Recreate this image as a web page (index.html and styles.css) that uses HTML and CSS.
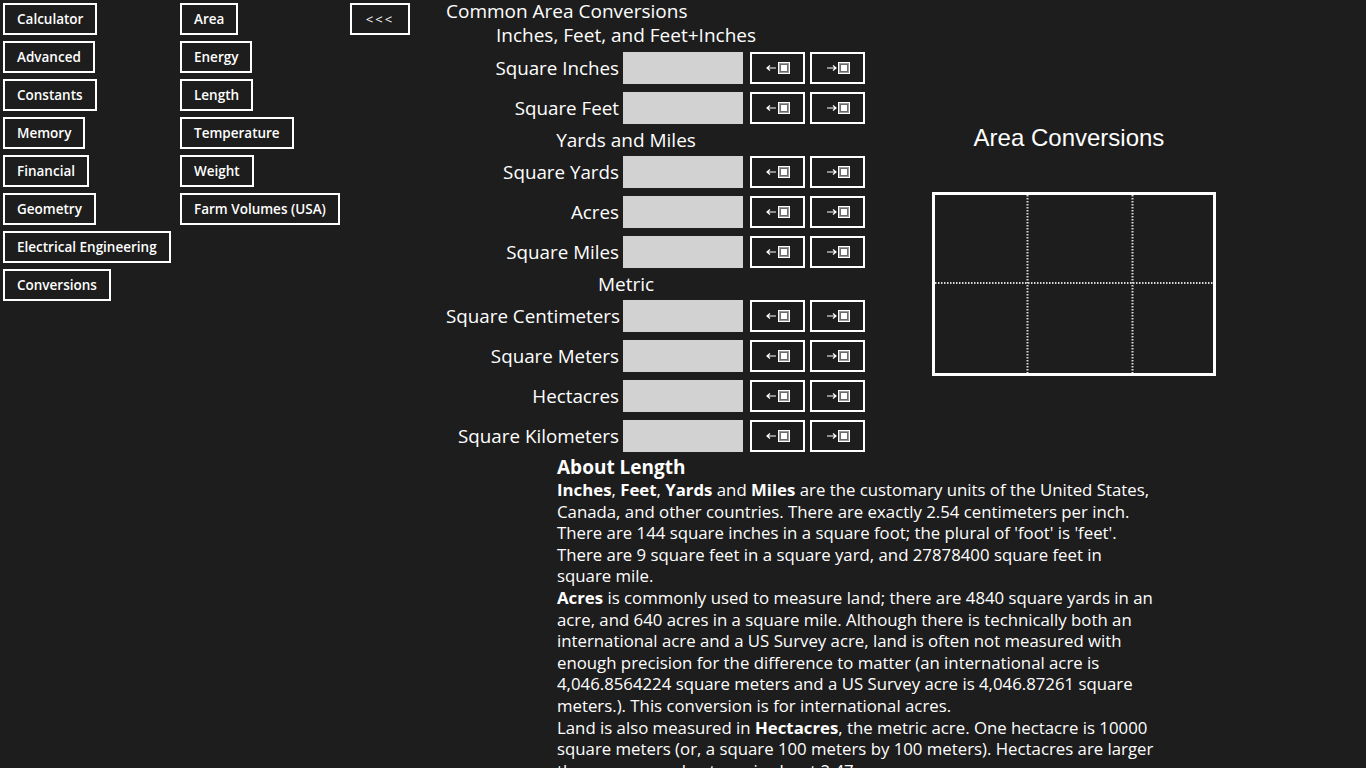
FILE: index.html
```html
<!DOCTYPE html>
<html lang="en">
<head>
<meta charset="utf-8">
<title>Area Conversions</title>
<link rel="stylesheet" href="styles.css">
</head>
<body>
<svg class="defs" width="0" height="0" aria-hidden="true">
  <symbol id="box" viewBox="0 0 12 12">
    <rect x="0.5" y="0.5" width="11" height="11" fill="#9a9a9a" stroke="#ffffff" stroke-width="1"/>
    <rect x="2.5" y="2.5" width="7" height="7" fill="#ffffff" stroke="#6a6a6a" stroke-width="1"/>
  </symbol>
</svg>
<div class="app">
  <nav class="nav-col col1">
    <button class="nav-btn">Calculator</button>
    <button class="nav-btn">Advanced</button>
    <button class="nav-btn">Constants</button>
    <button class="nav-btn">Memory</button>
    <button class="nav-btn">Financial</button>
    <button class="nav-btn">Geometry</button>
    <button class="nav-btn">Electrical Engineering</button>
    <button class="nav-btn">Conversions</button>
  </nav>
  <nav class="nav-col col2">
    <button class="nav-btn">Area</button>
    <button class="nav-btn">Energy</button>
    <button class="nav-btn">Length</button>
    <button class="nav-btn">Temperature</button>
    <button class="nav-btn">Weight</button>
    <button class="nav-btn">Farm Volumes (USA)</button>
  </nav>
  <div class="back-col">
    <button class="nav-btn back-btn">&lt;&lt;&lt;</button>
  </div>
  <main class="main">
    <div class="top">
      <section class="converter">
        <h1 class="title">Common Area Conversions</h1>
        <h2 class="group first">Inches, Feet, and Feet+Inches</h2>
        <div class="row">
          <label class="lbl">Square Inches</label><div class="field"></div>
          <button class="arrow-btn"><svg class="ico" viewBox="0 0 26 14"><path d="M2 7H11M5 4.5L2 7L5 9.5" fill="none" stroke="#fff" stroke-width="1.2"/><use href="#box" x="13" y="1" width="12" height="12"/></svg></button>
          <button class="arrow-btn"><svg class="ico" viewBox="0 0 26 14"><path d="M2 7H11M8 4.5L11 7L8 9.5" fill="none" stroke="#fff" stroke-width="1.2"/><use href="#box" x="13" y="1" width="12" height="12"/></svg></button>
        </div>
        <div class="row">
          <label class="lbl">Square Feet</label><div class="field"></div>
          <button class="arrow-btn"><svg class="ico" viewBox="0 0 26 14"><path d="M2 7H11M5 4.5L2 7L5 9.5" fill="none" stroke="#fff" stroke-width="1.2"/><use href="#box" x="13" y="1" width="12" height="12"/></svg></button>
          <button class="arrow-btn"><svg class="ico" viewBox="0 0 26 14"><path d="M2 7H11M8 4.5L11 7L8 9.5" fill="none" stroke="#fff" stroke-width="1.2"/><use href="#box" x="13" y="1" width="12" height="12"/></svg></button>
        </div>
        <h2 class="group">Yards and Miles</h2>
        <div class="row">
          <label class="lbl">Square Yards</label><div class="field"></div>
          <button class="arrow-btn"><svg class="ico" viewBox="0 0 26 14"><path d="M2 7H11M5 4.5L2 7L5 9.5" fill="none" stroke="#fff" stroke-width="1.2"/><use href="#box" x="13" y="1" width="12" height="12"/></svg></button>
          <button class="arrow-btn"><svg class="ico" viewBox="0 0 26 14"><path d="M2 7H11M8 4.5L11 7L8 9.5" fill="none" stroke="#fff" stroke-width="1.2"/><use href="#box" x="13" y="1" width="12" height="12"/></svg></button>
        </div>
        <div class="row">
          <label class="lbl">Acres</label><div class="field"></div>
          <button class="arrow-btn"><svg class="ico" viewBox="0 0 26 14"><path d="M2 7H11M5 4.5L2 7L5 9.5" fill="none" stroke="#fff" stroke-width="1.2"/><use href="#box" x="13" y="1" width="12" height="12"/></svg></button>
          <button class="arrow-btn"><svg class="ico" viewBox="0 0 26 14"><path d="M2 7H11M8 4.5L11 7L8 9.5" fill="none" stroke="#fff" stroke-width="1.2"/><use href="#box" x="13" y="1" width="12" height="12"/></svg></button>
        </div>
        <div class="row">
          <label class="lbl">Square Miles</label><div class="field"></div>
          <button class="arrow-btn"><svg class="ico" viewBox="0 0 26 14"><path d="M2 7H11M5 4.5L2 7L5 9.5" fill="none" stroke="#fff" stroke-width="1.2"/><use href="#box" x="13" y="1" width="12" height="12"/></svg></button>
          <button class="arrow-btn"><svg class="ico" viewBox="0 0 26 14"><path d="M2 7H11M8 4.5L11 7L8 9.5" fill="none" stroke="#fff" stroke-width="1.2"/><use href="#box" x="13" y="1" width="12" height="12"/></svg></button>
        </div>
        <h2 class="group">Metric</h2>
        <div class="row">
          <label class="lbl">Square Centimeters</label><div class="field"></div>
          <button class="arrow-btn"><svg class="ico" viewBox="0 0 26 14"><path d="M2 7H11M5 4.5L2 7L5 9.5" fill="none" stroke="#fff" stroke-width="1.2"/><use href="#box" x="13" y="1" width="12" height="12"/></svg></button>
          <button class="arrow-btn"><svg class="ico" viewBox="0 0 26 14"><path d="M2 7H11M8 4.5L11 7L8 9.5" fill="none" stroke="#fff" stroke-width="1.2"/><use href="#box" x="13" y="1" width="12" height="12"/></svg></button>
        </div>
        <div class="row">
          <label class="lbl">Square Meters</label><div class="field"></div>
          <button class="arrow-btn"><svg class="ico" viewBox="0 0 26 14"><path d="M2 7H11M5 4.5L2 7L5 9.5" fill="none" stroke="#fff" stroke-width="1.2"/><use href="#box" x="13" y="1" width="12" height="12"/></svg></button>
          <button class="arrow-btn"><svg class="ico" viewBox="0 0 26 14"><path d="M2 7H11M8 4.5L11 7L8 9.5" fill="none" stroke="#fff" stroke-width="1.2"/><use href="#box" x="13" y="1" width="12" height="12"/></svg></button>
        </div>
        <div class="row">
          <label class="lbl">Hectacres</label><div class="field"></div>
          <button class="arrow-btn"><svg class="ico" viewBox="0 0 26 14"><path d="M2 7H11M5 4.5L2 7L5 9.5" fill="none" stroke="#fff" stroke-width="1.2"/><use href="#box" x="13" y="1" width="12" height="12"/></svg></button>
          <button class="arrow-btn"><svg class="ico" viewBox="0 0 26 14"><path d="M2 7H11M8 4.5L11 7L8 9.5" fill="none" stroke="#fff" stroke-width="1.2"/><use href="#box" x="13" y="1" width="12" height="12"/></svg></button>
        </div>
        <div class="row">
          <label class="lbl">Square Kilometers</label><div class="field"></div>
          <button class="arrow-btn"><svg class="ico" viewBox="0 0 26 14"><path d="M2 7H11M5 4.5L2 7L5 9.5" fill="none" stroke="#fff" stroke-width="1.2"/><use href="#box" x="13" y="1" width="12" height="12"/></svg></button>
          <button class="arrow-btn"><svg class="ico" viewBox="0 0 26 14"><path d="M2 7H11M8 4.5L11 7L8 9.5" fill="none" stroke="#fff" stroke-width="1.2"/><use href="#box" x="13" y="1" width="12" height="12"/></svg></button>
        </div>
      </section>
      <aside class="panel">
        <h2 class="panel-title">Area Conversions</h2>
        <svg class="grid-box" width="284" height="184" viewBox="0 0 284 184">
          <line x1="95.5" y1="3" x2="95.5" y2="181" stroke="#d8d8d8" stroke-width="2" stroke-dasharray="1.5 1.5"/>
          <line x1="200.5" y1="3" x2="200.5" y2="181" stroke="#d8d8d8" stroke-width="2" stroke-dasharray="1.5 1.5"/>
          <line x1="3" y1="91" x2="281" y2="91" stroke="#d8d8d8" stroke-width="2" stroke-dasharray="1.5 1.5"/>
          <rect x="1.5" y="1.5" width="281" height="181" fill="none" stroke="#ffffff" stroke-width="3"/>
        </svg>
      </aside>
    </div>
    <article class="about">
      <h3 class="about-title">About Length</h3>
      <p class="about-text"><b>Inches</b>, <b>Feet</b>, <b>Yards</b> and <b>Miles</b> are the customary units of the United States,<br>Canada, and other countries. There are exactly 2.54 centimeters per inch.<br>There are 144 square inches in a square foot; the plural of 'foot' is 'feet'.<br>There are 9 square feet in a square yard, and 27878400 square feet in<br>square mile.</p>
      <p class="about-text"><b>Acres</b> is commonly used to measure land; there are 4840 square yards in an<br>acre, and 640 acres in a square mile. Although there is technically both an<br>international acre and a US Survey acre, land is often not measured with<br>enough precision for the difference to matter (an international acre is<br>4,046.8564224 square meters and a US Survey acre is 4,046.87261 square<br>meters.). This conversion is for international acres.</p>
      <p class="about-text">Land is also measured in <b>Hectacres</b>, the metric acre. One hectacre is 10000<br>square meters (or, a square 100 meters by 100 meters). Hectacres are larger<br>than acres; one hectacre is about 2.47 acres.</p>
    </article>
  </main>
</div>
</body>
</html>
```
FILE: styles.css
```css
html, body {
  margin: 0;
  padding: 0;
  height: 768px;
  overflow: hidden;
  background: #1d1d1d;
  color: #ffffff;
  font-family: "Open Sans", "Noto Sans", sans-serif;
}

.defs {
  position: absolute;
  width: 0;
  height: 0;
}

.app {
  display: flex;
  align-items: flex-start;
}

.nav-col {
  display: flex;
  flex-direction: column;
  align-items: flex-start;
  gap: 6px;
  padding-top: 3px;
  box-sizing: border-box;
  flex: none;
}

.col1 {
  width: 180px;
  padding-left: 3px;
}

.col2 {
  width: 170px;
}

.back-col {
  width: 96px;
  padding-top: 3px;
  flex: none;
}

.nav-btn {
  height: 32px;
  box-sizing: border-box;
  border: 2px solid #ffffff;
  background: transparent;
  color: #ffffff;
  font-family: "Open Sans", "Noto Sans", sans-serif;
  font-weight: 600;
  font-size: 13.5px;
  padding: 0 12px;
  margin: 0;
  white-space: nowrap;
  line-height: 27px;
}

.back-btn {
  width: 60px;
  padding: 0;
  font-weight: 400;
  font-size: 13px;
  letter-spacing: 2px;
}

.main {
  display: flex;
  flex-direction: column;
}

.top {
  display: flex;
  align-items: flex-start;
}

.converter {
  width: 418px;
  flex: none;
  display: flex;
  flex-direction: column;
}

.title {
  margin: 0;
  font-weight: 400;
  font-size: 19px;
  line-height: 23px;
  white-space: nowrap;
}

.group {
  margin: 0;
  width: 360px;
  text-align: center;
  font-weight: 400;
  font-size: 19px;
  line-height: 32px;
  white-space: nowrap;
}

.group.first {
  line-height: 24px;
  margin-bottom: 5px;
}

.row {
  display: flex;
  align-items: center;
  height: 32px;
  gap: 0;
}

.row + .row {
  margin-top: 8px;
}

.lbl {
  flex: none;
  width: 173px;
  text-align: right;
  font-size: 18.8px;
  white-space: nowrap;
  margin-right: 4px;
}

.field {
  flex: none;
  width: 120px;
  height: 32px;
  background: #d2d2d2;
  margin-right: 7px;
}

.arrow-btn {
  flex: none;
  width: 55px;
  height: 32px;
  box-sizing: border-box;
  border: 2px solid #ffffff;
  background: transparent;
  margin: 0;
  padding: 0;
  display: flex;
  align-items: center;
  justify-content: center;
}

.arrow-btn + .arrow-btn {
  margin-left: 5px;
}

.ico {
  width: 26px;
  height: 14px;
  display: block;
}

.panel {
  flex: none;
  margin-left: 68px;
  width: 284px;
  padding-top: 124px;
  display: flex;
  flex-direction: column;
  align-items: center;
}

.panel-title {
  margin: 0 10px 0 0;
  font-family: "Liberation Sans", Arial, sans-serif;
  font-weight: 400;
  font-size: 24px;
  line-height: 28px;
}

.grid-box {
  display: block;
  margin-top: 40px;
}

.about {
  margin: 4px 0 0 111px;
}

.about-title {
  margin: 0;
  font-size: 19px;
  font-weight: 700;
  line-height: 23px;
}

.about-text {
  margin: 0;
  font-size: 16.8px;
  line-height: 21.6px;
  white-space: nowrap;
}

.about-text b {
  font-weight: 700;
}
```
